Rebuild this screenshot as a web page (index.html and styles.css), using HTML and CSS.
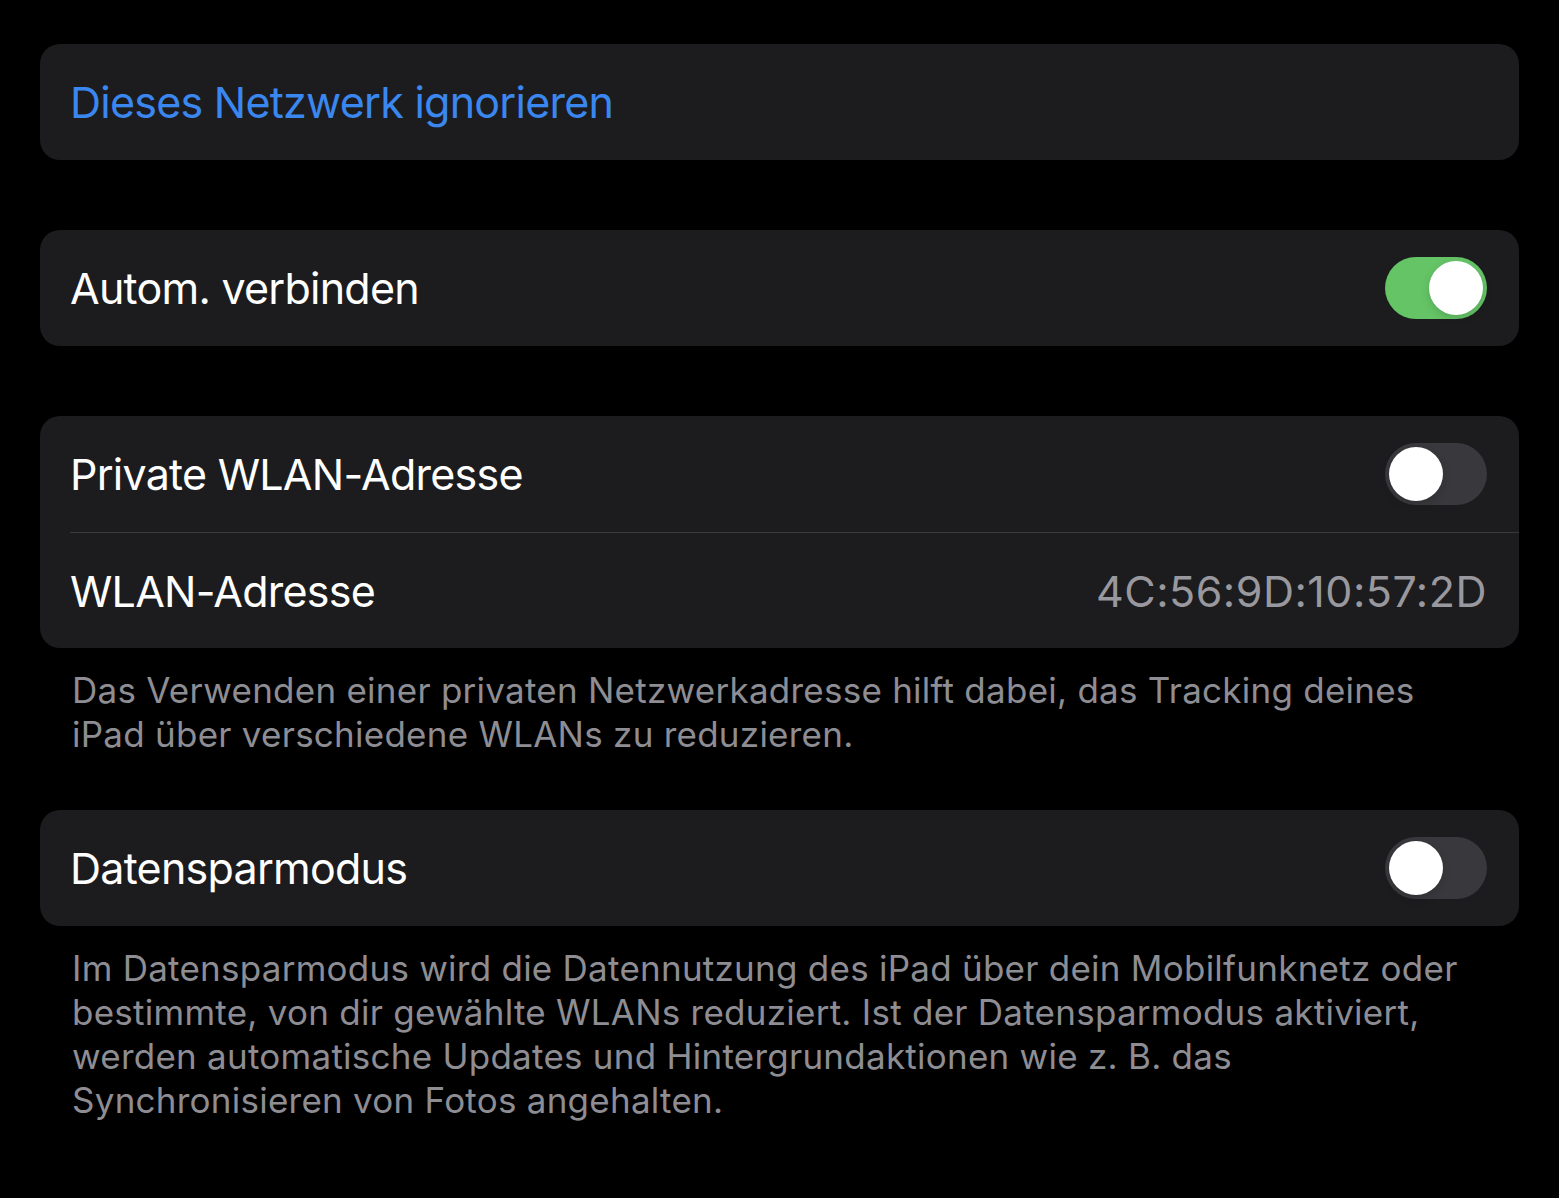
FILE: index.html
```html
<!DOCTYPE html>
<html lang="de">
<head>
  <meta charset="UTF-8" />
  <meta name="viewport" content="width=device-width, initial-scale=1.0" />
  <title>WLAN</title>
  <link rel="stylesheet" href="styles.css">
</head>
<body>
  <div id="settings">
    <div class="group">
      <div class="row">
        <span class="label link">Dieses Netzwerk ignorieren</span>
      </div>
    </div>

    <div class="group">
      <div class="row">
        <span class="label">Autom. verbinden</span>
        <span class="switch on"><span class="knob"></span></span>
      </div>
    </div>

    <div class="group">
      <div class="row">
        <span class="label">Private WLAN-Adresse</span>
        <span class="switch"><span class="knob"></span></span>
      </div>
      <div class="row">
        <span class="label">WLAN-Adresse</span>
        <span class="value">4C:56:9D:10:57:2D</span>
      </div>
    </div>
    <div class="footer">
      Das Verwenden einer privaten Netzwerkadresse hilft dabei, das Tracking deines<br>
      iPad über verschiedene WLANs zu reduzieren.
    </div>

    <div class="group">
      <div class="row">
        <span class="label">Datensparmodus</span>
        <span class="switch"><span class="knob"></span></span>
      </div>
    </div>
    <div class="footer">
      Im Datensparmodus wird die Datennutzung des iPad über dein Mobilfunknetz oder<br>
      bestimmte, von dir gewählte WLANs reduziert. Ist der Datensparmodus aktiviert,<br>
      werden automatische Updates und Hintergrundaktionen wie z. B. das<br>
      Synchronisieren von Fotos angehalten.
    </div>
  </div>
</body>
</html>
```

FILE: styles.css
```css
html, body {
  margin: 0;
  padding: 0;
  background: #000;
  font-family: "Inter", "Liberation Sans", sans-serif;
  color: #fff;
}

body {
  padding: 44px 40px;
  box-sizing: border-box;
}

#settings {
  display: flex;
  flex-direction: column;
}

.group {
  background: #1c1c1e;
  border-radius: 20px;
  margin-bottom: 70px;
  overflow: hidden;
}

.row {
  height: 116px;
  display: flex;
  align-items: center;
  justify-content: space-between;
  margin-left: 30px;
  padding-right: 32px;
  box-sizing: border-box;
}

.row + .row {
  border-top: 1px solid #3a3a3c;
}

.label {
  font-size: 43px;
  letter-spacing: -0.75px;
}

.link {
  color: #3b87f0;
}

.value {
  font-size: 43px;
  color: #98989e;
  letter-spacing: 0.5px;
}

.switch {
  width: 102px;
  height: 62px;
  border-radius: 31px;
  background: #39393d;
  padding: 4px;
  box-sizing: border-box;
  display: flex;
  justify-content: flex-start;
}

.switch.on {
  background: #65c466;
  justify-content: flex-end;
}

.knob {
  width: 54px;
  height: 54px;
  border-radius: 50%;
  background: #fff;
  box-shadow: 0 3px 8px rgba(0, 0, 0, 0.15);
}

.footer {
  margin-top: -50px;
  margin-bottom: 54px;
  padding-left: 32px;
  font-size: 35px;
  line-height: 44px;
  color: #8d8d93;
  letter-spacing: 0.25px;
}
```
